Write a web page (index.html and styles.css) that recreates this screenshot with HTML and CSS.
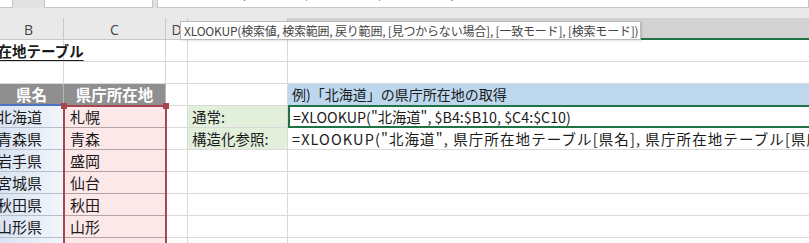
FILE: index.html
```html
<!DOCTYPE html>
<html lang="ja">
<head>
<meta charset="utf-8">
<link rel="stylesheet" href="styles.css">
</head>
<body>
<div class="app">
  <div class="fbar">
    <div class="fbox small"></div>
    <div class="fbox name"></div>
    <div class="fbox formula"><span class="ftext">=XLOOKUP("北海道", <span class="rb">$B4:$B10</span>, <span class="rr">$C4:$C10</span>)</span></div>
  </div>
  <div class="gap"></div>
  <div class="sheet">
    <div class="ch">B</div>
    <div class="ch">C</div>
    <div class="ch">D</div>
    <div class="ch"></div>
    <div class="ch sel"></div>

    <div class="c title"><span>県庁所在地テーブル</span></div>
    <div class="c"></div><div class="c"></div><div class="c"></div><div class="c"></div>

    <div class="c"></div><div class="c"></div><div class="c"></div><div class="c"></div><div class="c"></div>

    <div class="c th thb">県名</div>
    <div class="c th">県庁所在地</div>
    <div class="c"></div><div class="c"></div>
    <div class="c ex">例)「北海道」の県庁所在地の取得</div>

    <div class="c tb">北海道</div><div class="c tc">札幌</div><div class="c"></div>
    <div class="c lab">通常:</div>
    <div class="c cur">=XLOOKUP("北海道", $B4:$B10, $C4:$C10)</div>

    <div class="c tb">青森県</div><div class="c tc">青森</div><div class="c"></div>
    <div class="c lab">構造化参照:</div>
    <div class="c fx">=XLOOKUP("北海道", 県庁所在地テーブル[県名], 県庁所在地テーブル[県庁所在地])</div>

    <div class="c tb">岩手県</div><div class="c tc">盛岡</div><div class="c"></div><div class="c"></div><div class="c"></div>
    <div class="c tb">宮城県</div><div class="c tc">仙台</div><div class="c"></div><div class="c"></div><div class="c"></div>
    <div class="c tb">秋田県</div><div class="c tc">秋田</div><div class="c"></div><div class="c"></div><div class="c"></div>
    <div class="c tb">山形県</div><div class="c tc">山形</div><div class="c"></div><div class="c"></div><div class="c"></div>
    <div class="c tb"></div><div class="c tc"></div><div class="c"></div><div class="c"></div><div class="c"></div>
  </div>
  <div class="refc"><i class="h hl"></i><i class="h hr"></i></div>
  <div class="tip">XLOOKUP(検索値, 検索範囲, 戻り範囲, [見つからない場合], [一致モード], [検索モード])</div>
</div>
</body>
</html>
```

FILE: styles.css
```css
html, body {
  margin: 0;
  padding: 0;
  background: #ffffff;
  overflow: hidden;
}
.app {
  position: relative;
  width: 809px;
  height: 243px;
  overflow: hidden;
  font-family: "Noto Sans CJK JP", sans-serif;
  color: #1a1a1a;
}
.fbar {
  display: flex;
  height: 8px;
  background: #e1e1e1;
  gap: 4px;
}
.fbox {
  background: #ffffff;
  border-bottom: 1px solid #c6c6c6;
  border-right: 1px solid #c6c6c6;
  box-sizing: border-box;
  height: 8px;
  overflow: hidden;
  position: relative;
}
.fbox.small { width: 13px; margin-right: 27px; }
.fbox.name { width: 109px; border-left: 1px solid #c6c6c6; }
.fbox.formula { flex: 1; border-left: 1px solid #c6c6c6; }
.ftext {
  display: block;
  margin-top: -18px;
  margin-left: 6px;
  font-size: 15px;
  line-height: 20px;
  white-space: nowrap;
  color: #555;
}
.rb { color: #5b86d8; }
.rr { color: #d8646c; }
.gap {
  height: 10px;
  background: #e9e9e9;
}
.sheet {
  display: grid;
  grid-template-columns: 70px 102px 22px 100px 540px;
  grid-auto-rows: 22px;
  margin-left: -6px;
  width: 834px;
}
.ch {
  background: #e9e9e9;
  border-right: 1px solid #c8c8c8;
  border-bottom: 1px solid #c8c8c8;
  box-sizing: border-box;
  font-family: "Open Sans", "Noto Sans", sans-serif;
  font-size: 14px;
  color: #444;
  display: flex;
  align-items: center;
  justify-content: center;
  padding-top: 1px;
}
.ch.sel {
  background: #d2d2d2;
  border-bottom: 2px solid #217346;
  border-right: none;
}
.c {
  border-right: 1px solid #d9d9d9;
  border-bottom: 1px solid #d9d9d9;
  box-sizing: border-box;
  font-size: 14px;
  line-height: 21px;
  padding-left: 3px;
  white-space: nowrap;
  overflow: visible;
  min-width: 0;
}
.title {
  font-weight: bold;
  font-size: 14.5px;
  position: relative;
}
.title span {
  display: inline-block;
  margin-left: -43px;
  text-decoration: underline;
  text-underline-offset: 3px;
}
.th {
  background: #8f8f8f;
  color: #ffffff;
  font-weight: bold;
  font-size: 15.5px;
  text-align: center;
  padding-left: 0;
  border-right: 1px solid #b8b8b8;
  border-bottom: 1px solid #8f8f8f;
}
.thb {
  border-bottom: 2px solid #4a74c0;
  padding-left: 6px;
}
.tb {
  background: linear-gradient(to right, #d6e1f2, #f3f6fb);
  border-bottom: 1px solid #b9bdc6;
  border-right: none;
  padding-left: 3px;
  font-size: 15px;
}
.tc {
  background: #fce8e8;
  border-bottom: 1px solid #b3a3a5;
  border-right: none;
  padding-left: 6px;
  font-size: 15px;
}
.ex {
  background: #bdd7ee;
  padding-left: 4px;
  font-size: 14px;
  border-right: none;
}
.lab {
  background: #e2efda;
  padding-left: 4px;
  font-size: 14.5px;
}
.cur {
  border: 2px solid #217346;
  border-right: none;
  margin-top: -1px;
  height: 23px;
  line-height: 19px;
  padding-left: 3px;
  font-size: 14.3px;
}
.fx {
  padding-left: 4px;
  font-size: 14.5px;
  letter-spacing: 1.1px;
  border-right: none;
}
.refc {
  position: absolute;
  left: 63px;
  top: 105px;
  width: 104px;
  height: 160px;
  border: 2px solid #a8464f;
  box-sizing: border-box;
}
.h {
  position: absolute;
  top: -4px;
  width: 6px;
  height: 6px;
  background: #a8464f;
}
.hl { left: -4px; }
.hr { right: -4px; }
.tip {
  position: absolute;
  left: 180px;
  top: 21px;
  width: 461px;
  height: 19px;
  box-sizing: border-box;
  background: #ffffff;
  border: 1px solid #b9b9b9;
  box-shadow: 1px 1px 2px rgba(0,0,0,0.12);
  font-family: "Noto Sans CJK JP", sans-serif;
  font-size: 12px;
  letter-spacing: -0.2px;
  line-height: 17px;
  color: #444;
  padding-left: 3px;
  white-space: nowrap;
}
```
